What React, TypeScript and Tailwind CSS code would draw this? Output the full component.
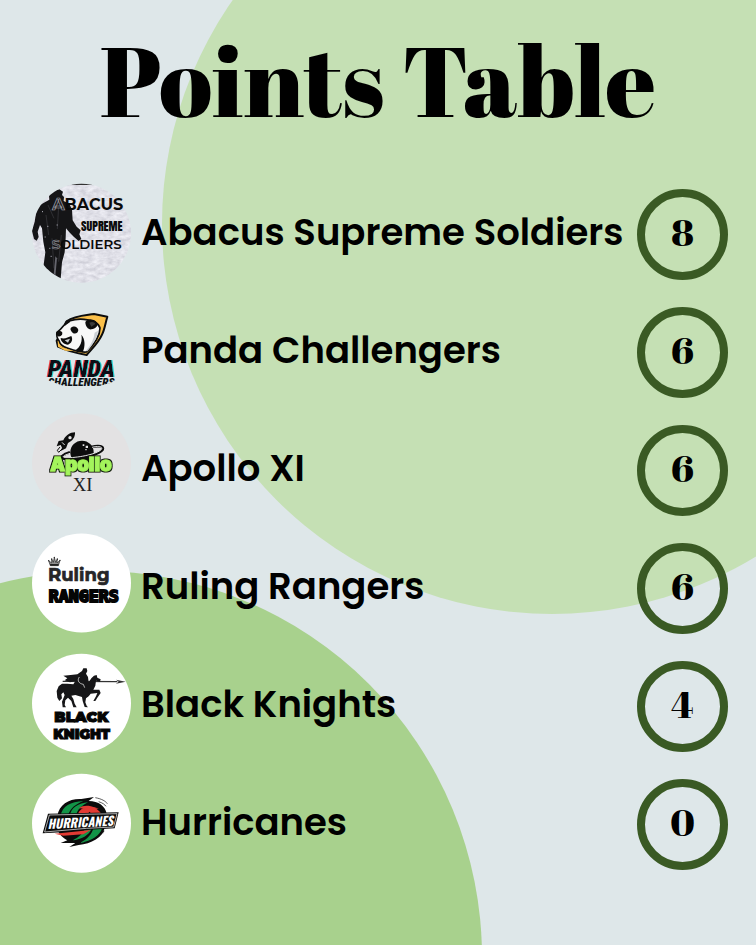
import type { ReactNode } from 'react';

const narrow = "font-['Roboto_Condensed','Liberation_Sans',sans-serif] font-black";
const heavy = "font-['Montserrat','Inter',sans-serif] font-black";
const display = "font-['Abril_Fatface','Noto_Serif_Display','Liberation_Serif',serif]";

function Badge({ label, children }: { label: string; children: ReactNode }) {
  return (
    <svg viewBox="36 0 297 354" className="block h-[118px] w-[99px]" role="img" aria-label={label}>
      {children}
    </svg>
  );
}

function SoldiersLogo() {
  return (
    <Badge label="Abacus Supreme Soldiers logo">
      <defs>
        <clipPath id="snow-clip">
          <circle cx="184.5" cy="175" r="148.5" />
        </clipPath>
        <filter id="snow" x="0" y="0" width="1" height="1">
          <feTurbulence type="fractalNoise" baseFrequency="0.05 0.09" numOctaves="3" seed="4" />
          <feColorMatrix values="0.4 0 0 0 0.55  0.4 0 0 0 0.55  0.38 0 0 0 0.62  0 0 0 0 1" />
        </filter>
      </defs>
      <g clipPath="url(#snow-clip)">
        <rect x="36" y="26" width="298" height="298" fill="#c9c9d6" filter="url(#snow)" />
        <rect x="155" y="24" width="70" height="6" fill="#333" />
        <path
          fill="#151517"
          d="M87 62 L98 49 L118 43 L129 50 L126 60 L132 66 L131 78 L148 86 L156 104 L158 136 L170 155 L182 166 L178 178 L184 192 L176 198 L162 186 L148 172 L138 160 L137 190 L134 232 L126 262 L122 312 L96 300 L70 276 L76 232 L70 200 L66 160 L60 150 L53 170 L56 186 L50 197 L42 192 L36 168 L44 140 L49 108 L60 90 L88 74 Z"
        />
        <path d="M84 90 l18 40 M78 120 l8 60 M116 92 l-4 70 M96 190 l6 90 M124 180 l-8 80" stroke="#303034" strokeWidth="3" fill="none" />
        <path d="M106 244 L111 250 L106 304 L101 300 Z" fill="#66666e" />
        <path d="M82 154h3 M100 206h3 M74 186h3 M110 150h3 M92 244h3 M118 214h3 M88 220h3 M66 110h3" stroke="#b9b9c4" strokeWidth="3" />
      </g>
      <text x="97" y="104" className="font-['Montserrat','Inter',sans-serif] font-bold" fontSize="48" fill="#0b0b0b">
        <tspan fill="#1c1c1e" stroke="#a5a5ad" strokeWidth="2">A</tspan>BACUS
      </text>
      <text x="183" y="168" className="font-['Anton','Roboto_Condensed',sans-serif]" fontSize="36" fill="#0b0b0b">
        SUPREME
      </text>
      <text x="95" y="222" className="font-['Montserrat','Inter',sans-serif] font-semibold" fontSize="40" fill="#0b0b0b">
        <tspan fill="#1c1c1e" stroke="#8a8a92" strokeWidth="2">S</tspan>OLDIERS
      </text>
    </Badge>
  );
}

function PandaLogo() {
  return (
    <Badge label="Panda Challengers logo">
      <defs>
        <clipPath id="panda-clip">
          <path d="M36 0 H333 V262 H290 L270 270 L240 278 L185 281 L130 278 L106 270 L84 262 H36 Z" />
        </clipPath>
        <filter id="split" x="-0.1" y="-0.1" width="1.2" height="1.2">
          <feOffset in="SourceAlpha" dx="-3" result="left" />
          <feOffset in="SourceAlpha" dx="4" result="right" />
          <feFlood floodColor="#ef3e3e" />
          <feComposite in2="left" operator="in" result="red" />
          <feFlood floodColor="#25d5d8" />
          <feComposite in2="right" operator="in" result="cyan" />
          <feMerge>
            <feMergeNode in="red" />
            <feMergeNode in="cyan" />
            <feMergeNode in="SourceGraphic" />
          </feMerge>
        </filter>
      </defs>
      <g transform="translate(0 21)">
        <path d="M140 64 C165 46 200 46 222 42 L262 50 C256 70 254 88 246 104 C236 128 216 146 200 165 C170 160 140 152 114 140 L110 122 Z" fill="#fbc04a" stroke="#0d0d0d" strokeWidth="6" strokeLinejoin="round" />
        <path d="M111 97 C120 90 124 86 130 78 C142 62 166 56 192 58 C214 60 236 68 240 84 C240 108 222 134 200 156 C176 158 158 150 142 144 C130 140 120 136 118 124 C112 116 108 108 111 97 Z" fill="#f8f8f8" stroke="#0d0d0d" strokeWidth="5" />
        <path d="M196 66 C204 56 224 56 231 68 C238 76 226 86 214 88 C206 90 196 80 196 66 Z" fill="#0d0d0d" />
        <path d="M208 68 C216 64 224 66 226 72 L214 80 Z" fill="#3a3a3a" />
        <path d="M146 60 C138 60 131 68 134 78 L150 66 Z" fill="#0d0d0d" />
        <path d="M152 84 C162 76 172 80 175 90 C174 100 164 104 158 98 C154 94 150 90 152 84 Z" fill="#0d0d0d" />
        <path d="M109 97 C114 92 124 92 127 98 C128 106 118 112 112 108 Z" fill="#0d0d0d" />
        <path d="M122 114 C134 118 144 112 154 108 C160 120 154 130 144 134 C132 134 122 124 122 114 Z" fill="#0d0d0d" />
        <path d="M134 121 L150 116 L144 128 Z" fill="#c7ccd0" />
        <path d="M164 152 C182 142 188 122 184 104 C196 118 196 138 188 157 Z" fill="#0d0d0d" />
        <path d="M198 152 C214 134 222 116 224 98 L234 92 C232 116 216 136 202 154 Z" fill="#c9ced2" />
        <path d="M113 122 L122 140 L160 153 L136 152 L114 140 Z" fill="#fbc04a" />
      </g>
      <g clipPath="url(#panda-clip)" className={narrow} fontStyle="italic" fill="#0d1114">
        <text x="83" y="252" fontSize="73" filter="url(#split)">PANDA</text>
        <text x="84" y="280" fontSize="34">CHALLENGERS</text>
      </g>
    </Badge>
  );
}

function ApolloLogo() {
  return (
    <Badge label="Apollo XI logo">
      <defs>
        <filter id="outline" x="-0.1" y="-0.2" width="1.2" height="1.4">
          <feMorphology in="SourceAlpha" operator="dilate" radius="3" result="wide" />
          <feFlood floodColor="#10180a" />
          <feComposite in2="wide" operator="in" result="edge" />
          <feMerge>
            <feMergeNode in="edge" />
            <feMergeNode in="SourceGraphic" />
          </feMerge>
        </filter>
      </defs>
      <g transform="translate(0 -18)">
        <circle cx="184.5" cy="174" r="148.5" fill="#e3e2e3" />
        <path d="M165 82 C150 82 136 92 130 106 L116 108 L110 124 L122 120 L126 128 L122 138 L138 130 L144 114 C158 108 166 96 165 82 Z" fill="#0d0d0d" />
        <circle cx="150" cy="98" r="5" fill="#e3e2e3" />
        <path d="M120 126 L112 136 L116 142 L126 132" fill="none" stroke="#0d0d0d" strokeWidth="3" />
        <path d="M126 112 l8 8" stroke="#e3e2e3" strokeWidth="3" />
        <circle cx="186" cy="142" r="35" fill="#0d0d0d" />
        <path d="M214 126 C238 120 252 124 248 134 C240 148 190 160 150 162 C124 163 118 156 134 148 L150 142" fill="none" stroke="#0d0d0d" strokeWidth="8" />
        <path d="M216 127 C236 122 248 126 245 132 C238 144 190 156 150 158 C130 159 124 156 136 150 L150 145" fill="none" stroke="#e3e2e3" strokeWidth="3" />
        <path d="M188 118h5v5h-5z M197 122h7v7h-7z M196 132h4v4h-4z" fill="#e3e2e3" />
        <text x="91" y="197" className="font-['Inter',sans-serif] font-black" fontSize="56" fill="#a4f45c" stroke="#a4f45c" strokeWidth="3" filter="url(#outline)">Apollo</text>
        <text x="158" y="257" className="font-['Liberation_Serif',serif]" fontSize="56" fill="#222">XI</text>
      </g>
    </Badge>
  );
}

function RangersLogo() {
  return (
    <Badge label="Ruling Rangers logo">
      <g transform="translate(0 -12)">
        <circle cx="184.5" cy="174" r="148.5" fill="#fff" />
        <path d="M91 122 L86 107 L95 114 L95 102 L100 112 L103 97 L107 112 L112 102 L111 114 L120 106 L115 122 Z" fill="#222" fillOpacity="0.5" stroke="#222" strokeWidth="2" />
        <path d="M91 122 H115 L116 117 H90 Z" fill="#222" />
        <g fill="#222">
          <circle cx="86" cy="107" r="2" /><circle cx="95" cy="102" r="2" /><circle cx="103" cy="97" r="2" /><circle cx="112" cy="102" r="2" /><circle cx="120" cy="106" r="2" />
        </g>
        <text x="84" y="167" className="font-['Montserrat','Inter',sans-serif] font-bold" fontSize="54" fill="#262628" stroke="#262628" strokeWidth="2">Ruling</text>
        <text x="86" y="231" className="font-['DejaVu_Sans_Mono',monospace] font-bold" fontSize="50" fill="#050505" stroke="#050505" strokeWidth="6">RANGERS</text>
      </g>
    </Badge>
  );
}

function KnightsLogo() {
  return (
    <Badge label="Black Knights logo">
      <g transform="translate(0 -6)">
        <circle cx="184.5" cy="175" r="148.5" fill="#fff" />
        <path d="M128 109 L292 110" stroke="#333" strokeWidth="4" />
        <path d="M288 104 L317 110 L288 116 L296 110 Z" fill="#333" />
        <path
          fill="#161618"
          d="M186 78 L190 70 L200 70 L202 78 L198 86 L204 96 L206 112 L214 100 L222 92 L230 90 L232 98 L242 103 L240 110 L228 107 L226 122 L220 134 L238 134 L242 144 L232 158 L226 168 L220 168 L228 154 L232 144 L212 146 L206 154 L198 160 L196 172 L200 182 L204 187 L194 186 L188 168 L186 156 L166 150 L154 152 L160 162 L164 176 L170 187 L160 187 L154 168 L144 158 L136 166 L134 180 L138 187 L128 187 L126 170 L134 150 L130 142 L124 148 L126 160 L118 168 L112 158 L110 138 L116 124 L126 116 L142 116 L160 118 L166 108 L150 112 L134 106 L142 100 L130 92 L152 90 L172 88 Z"
        />
        <path d="M178 96 C170 108 178 116 190 118 L194 128" stroke="#fff" strokeWidth="2" fill="none" />
        <g className={heavy} fill="#050505" stroke="#050505" strokeWidth="3">
          <text x="103" y="231" fontSize="44">BLACK</text>
          <text x="100" y="282" fontSize="41">KNIGHT</text>
        </g>
      </g>
    </Badge>
  );
}

function HurricanesLogo() {
  return (
    <Badge label="Hurricanes logo">
      <circle cx="184.5" cy="175" r="148.5" fill="#fff" />
      <path d="M112 152 C118 118 148 100 184 102 L222 96 L206 108 C236 108 256 124 260 146 L250 206 L258 184 C248 220 214 236 176 240 L148 246 L166 234 L122 234 L142 226 C124 216 112 202 110 180 Z" fill="#0b0b0b" />
      <path d="M122 152 C126 124 152 110 190 108 C166 118 150 130 144 152 Z" fill="#129447" />
      <path d="M150 152 C152 128 176 114 204 112 C186 122 172 132 168 152 Z" fill="#129447" />
      <path d="M174 148 C178 128 208 118 238 132 C222 130 208 136 204 148 Z" fill="#e23a33" />
      <path d="M176 130 C196 116 226 122 244 146 L214 146 C206 136 192 130 176 130 Z" fill="#e23a33" />
      <path d="M246 190 C240 212 216 228 180 234 C204 222 216 206 220 190 Z" fill="#129447" />
      <path d="M214 192 C208 210 184 224 158 226 C178 216 190 204 194 192 Z" fill="#129447" />
      <path d="M226 98 C246 102 256 108 262 116 M236 110 C248 114 254 118 258 124" stroke="#0b0b0b" strokeWidth="2" fill="none" />
      <path d="M84 146 L296 142 L284 190 L210 194 L156 200 L68 205 Z" fill="#0b0b0b" />
      <path d="M88 150 L291 146 L281 186 L200 190 L74 201 Z" fill="none" stroke="#fff" strokeWidth="2" />
      <path d="M104 206 L212 195 L190 208 L130 212 Z" fill="#e23a33" />
      <g transform="rotate(-3 184 172)">
        <text x="82" y="187" className="font-['Oswald','Roboto_Condensed',sans-serif] font-bold" fontStyle="italic" fontSize="37" fill="#fff">HURRICANES</text>
      </g>
    </Badge>
  );
}

const teams = [
  { name: 'Abacus Supreme Soldiers', points: 8, Logo: SoldiersLogo },
  { name: 'Panda Challengers', points: 6, Logo: PandaLogo },
  { name: 'Apollo XI', points: 6, Logo: ApolloLogo },
  { name: 'Ruling Rangers', points: 6, Logo: RangersLogo },
  { name: 'Black Knights', points: 4, Logo: KnightsLogo },
  { name: 'Hurricanes', points: 0, Logo: HurricanesLogo },
];

export default function App() {
  return (
    <main className="relative isolate min-h-screen overflow-hidden bg-[#dee7e9] pb-[62px] text-black">
      <div className="absolute -top-[166px] left-[162px] -z-10 size-[780px] rounded-full bg-[#c5e0b4]" />
      <div className="absolute -left-[290px] top-[571px] -z-10 size-[772px] rounded-full bg-[#a8d18d]" />
      <h1 className={`${display} h-[175px] pt-5 text-center text-[98px] leading-[120px] whitespace-nowrap`}>
        Points Table
      </h1>
      <table className="w-full border-collapse" aria-label="Points Table">
        <tbody>
          {teams.map(({ name, points, Logo }) => (
            <tr key={name} className="h-[118px]">
              <td className="w-[131px] p-0 pl-8">
                <Logo />
              </td>
              <th scope="row" className="p-0 pb-1 pl-2.5 text-left font-['Poppins','Inter',sans-serif] text-[37px] leading-[48px] font-semibold whitespace-nowrap">
                {name}
              </th>
              <td className="w-[119px] p-0 pr-7">
                <div className={`${display} ml-auto flex size-[91px] items-center justify-center rounded-full border-8 border-[#3a5a24] pb-1 text-[37px] leading-10`}>
                  {points}
                </div>
              </td>
            </tr>
          ))}
        </tbody>
      </table>
    </main>
  );
}
